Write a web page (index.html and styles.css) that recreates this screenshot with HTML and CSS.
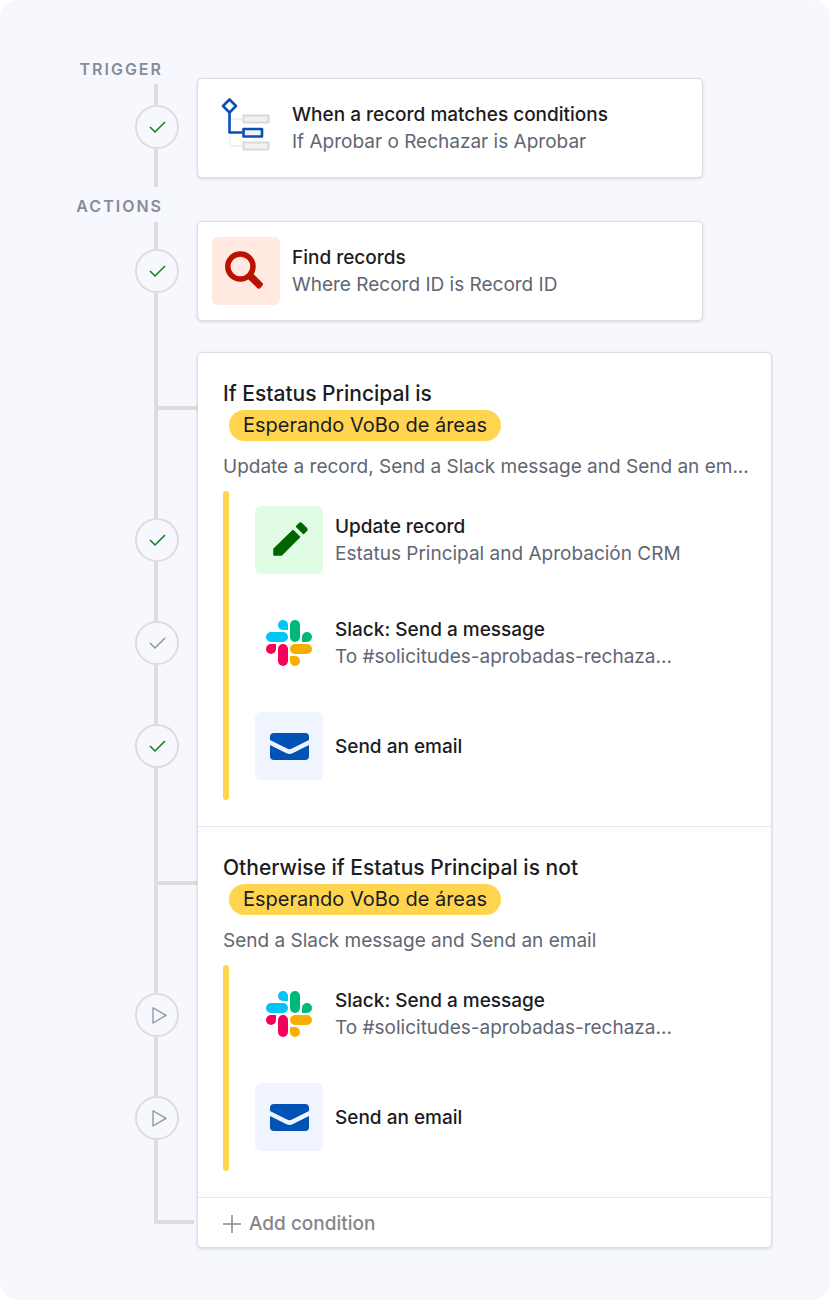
FILE: index.html
```html
<!DOCTYPE html>
<html lang="en">
<head>
  <meta charset="UTF-8">
  <meta name="viewport" content="width=device-width, initial-scale=1.0">
  <title>Automation</title>
  <link rel="stylesheet" href="styles.css">
</head>
<body>
  <!-- Shared icons -->
  <svg class="sprite" aria-hidden="true">
    <symbol id="check" viewBox="0 0 44 44">
      <path d="M15 22l5 5 10-10" fill="none" stroke="currentColor" stroke-width="1.5"/>
    </symbol>
    <symbol id="play" viewBox="0 0 44 44">
      <path d="M18 14.8v15.2l13-7.6z" fill="none" stroke="currentColor" stroke-width="1.3" stroke-linejoin="round"/>
    </symbol>
    <symbol id="slack" viewBox="0 0 68 68">
      <g transform="translate(11 11)">
        <path fill="#00c5f5" d="M5 12h12a5 5 0 0 1 0 10H5a5 5 0 0 1 0-10zM17 0a5 5 0 0 1 5 5v5h-5a5 5 0 0 1 0-10z"/>
        <path fill="#00b877" d="M29 0a5 5 0 0 1 5 5v12a5 5 0 0 1-10 0V5a5 5 0 0 1 5-5zM41 12a5 5 0 0 1 0 10h-5v-5a5 5 0 0 1 5-5z"/>
        <path fill="#f6005c" d="M5 24h5v5a5 5 0 1 1-5-5zM17 24a5 5 0 0 1 5 5v12a5 5 0 0 1-10 0V29a5 5 0 0 1 5-5z"/>
        <path fill="#f8ae00" d="M29 24h12a5 5 0 0 1 0 10H29a5 5 0 0 1 0-10zM24 36h5a5 5 0 1 1-5 5z"/>
      </g>
    </symbol>
    <symbol id="mail" viewBox="0 0 68 68">
      <path fill="#0052b4" d="M19 21h31q4 0 4 4v3L37 36.6q-2.500 1.200-5 0L15 28v-3q0-4 4-4z"/>
      <path fill="#0052b4" d="M15 33l16.500 8.300q3 1.400 6 0L54 33v11q0 4-4 4H19q-4 0-4-4z"/>
    </symbol>
  </svg>

  <main class="flow">
    <div class="rail">
      <h2 class="rail-label">TRIGGER</h2>
      <span class="line line-top"></span>
      <span class="node done"><svg><use href="#check"/></svg></span>
      <span class="line line-trigger"></span>
      <h2 class="rail-label actions">ACTIONS</h2>
      <span class="line line-actions"></span>
      <span class="node done"><svg><use href="#check"/></svg></span>
      <span class="line line-long"></span>
      <span class="branch"></span>
      <span class="line line-long"></span>
      <span class="node done"><svg><use href="#check"/></svg></span>
      <span class="line line-step"></span>
      <span class="node"><svg><use href="#check"/></svg></span>
      <span class="line line-step"></span>
      <span class="node done"><svg><use href="#check"/></svg></span>
      <span class="line line-long"></span>
      <span class="branch"></span>
      <span class="line line-long"></span>
      <span class="node"><svg><use href="#play"/></svg></span>
      <span class="line line-step"></span>
      <span class="node"><svg><use href="#play"/></svg></span>
      <span class="line line-end"></span>
      <span class="branch branch-end"></span>
    </div>

    <div class="cards">
      <article class="card step-card">
        <svg class="icon" viewBox="0 0 68 68">
          <g fill="none" stroke-linejoin="round">
            <path d="M18 25h12M18 43v9h12" stroke="#eff0f5" stroke-width="2"/>
            <rect x="31.500" y="21.500" width="25" height="7" fill="#f1f1f3" stroke="#d9dadd" stroke-width="2.200"/>
            <rect x="31.500" y="48.500" width="25" height="7" fill="#f1f1f3" stroke="#d9dadd" stroke-width="2.200"/>
            <path d="M17.500 5.500l6.500 6.500-6.500 6.500L11 12z" stroke="#0a4fb5" stroke-width="2.600"/>
            <path d="M17.500 18.500v20H30.500" stroke="#0a4fb5" stroke-width="2.600"/>
            <rect x="31.500" y="35" width="18.500" height="7.500" fill="#f1f3f9" stroke="#0a4fb5" stroke-width="2.600"/>
          </g>
        </svg>
        <div class="text">
          <h3>When a record matches conditions</h3>
          <p>If Aprobar o Rechazar is Aprobar</p>
        </div>
      </article>

      <article class="card step-card find">
        <svg class="icon red" viewBox="0 0 68 68">
          <circle cx="28.400" cy="29.500" r="12.600" fill="none" stroke="#b91200" stroke-width="5.500"/>
          <path d="M37.500 38.500l3-2.500 10 10q1.200 1.200 0 2.400l-2.400 2.800q-1.200 1.200-2.600 0L35.500 41.500z" fill="#b91200"/>
        </svg>
        <div class="text">
          <h3>Find records</h3>
          <p>Where Record ID is Record ID</p>
        </div>
      </article>

      <div class="card conditions">
        <section class="condition">
          <h2>If Estatus Principal is</h2>
          <span class="pill">Esperando VoBo de áreas</span>
          <p class="summary">Update a record, Send a Slack message and Send an em...</p>
          <ul class="steps">
            <li>
              <svg class="icon green" viewBox="0 0 68 68">
                <g fill="#006400" stroke="#006400" stroke-width="1.500" stroke-linejoin="round">
                  <path d="M19 49v-6l19-18.500 6.500 6.500-18 18z"/>
                  <path d="M41.500 20.500l3-3q1-1 2 0l5 5q1 1 0 2l-3 3z"/>
                </g>
              </svg>
              <div class="text">
                <h3>Update record</h3>
                <p>Estatus Principal and Aprobación CRM</p>
              </div>
            </li>
            <li>
              <svg class="icon"><use href="#slack"/></svg>
              <div class="text">
                <h3>Slack: Send a message</h3>
                <p>To #solicitudes-aprobadas-rechaza...</p>
              </div>
            </li>
            <li>
              <svg class="icon blue"><use href="#mail"/></svg>
              <div class="text">
                <h3>Send an email</h3>
              </div>
            </li>
          </ul>
        </section>

        <section class="condition">
          <h2>Otherwise if Estatus Principal is not</h2>
          <span class="pill">Esperando VoBo de áreas</span>
          <p class="summary">Send a Slack message and Send an email</p>
          <ul class="steps">
            <li>
              <svg class="icon"><use href="#slack"/></svg>
              <div class="text">
                <h3>Slack: Send a message</h3>
                <p>To #solicitudes-aprobadas-rechaza...</p>
              </div>
            </li>
            <li>
              <svg class="icon blue"><use href="#mail"/></svg>
              <div class="text">
                <h3>Send an email</h3>
              </div>
            </li>
          </ul>
        </section>

        <button class="add" type="button">
          <svg class="plus" viewBox="0 0 18 18"><path d="M9 0v18M0 9h18" stroke="currentColor" stroke-width="1.500"/></svg>
          Add condition
        </button>
      </div>
    </div>
  </main>
</body>
</html>
```
FILE: styles.css
```css
* {
  box-sizing: border-box;
}

body {
  margin: 0;
  background-color: #fff;
  color: #1b1c22;
  font-family: Inter, "Liberation Sans", sans-serif;
  font-size: 19px;
  line-height: 27px;
}

h2, h3, p, ul {
  margin: 0;
  padding: 0;
}

.sprite {
  display: none;
}

.flow {
  display: flex;
  min-height: 100vh;
  padding: 59px 58px 52px 60px;
  background-color: #f6f8fd;
  border-radius: 18px;
}

/* Rail on the left */
.rail {
  display: flex;
  flex-direction: column;
  flex: none;
  width: 137px;
}

.rail-label {
  height: 20px;
  padding-right: 34px;
  color: #868c98;
  font-size: 16px;
  font-weight: 600;
  line-height: 20px;
  letter-spacing: 2px;
  text-align: right;
}

.rail-label.actions {
  margin-top: 9px;
}

.line {
  width: 4px;
  margin-left: 94px;
  background-color: #dbdde1;
}

.line-top {
  height: 21px;
  margin-top: 5px;
}

.line-trigger {
  height: 38px;
}

.line-actions {
  height: 27px;
  margin-top: 6px;
}

.line-long {
  height: 113px;
}

.branch + .line-long {
  height: 108px;
}

.line-step {
  height: 59px;
}

.line-end {
  height: 80px;
}

.branch {
  height: 4px;
  margin-left: 94px;
  background-color: #dbdde1;
}

.branch-end {
  margin-right: 3px;
}

.node {
  display: flex;
  width: 44px;
  height: 44px;
  margin-left: 75px;
  border: 2px solid #dbdde1;
  border-radius: 50%;
  color: #8d929c;
}

.node svg {
  flex: none;
  width: 44px;
  height: 44px;
  margin: -2px;
}

.node.done {
  color: #0b7d1c;
}

/* Cards */
.cards {
  flex: 1;
  min-width: 0;
  padding-top: 19px;
}

.card {
  background-color: #fff;
  border: 1px solid #dcdee2;
  border-radius: 5px;
  box-shadow: 0 1px 3px rgba(40, 45, 60, 0.16);
}

.step-card {
  display: flex;
  align-items: center;
  gap: 12px;
  width: 88%;
  padding: 15px 14px;
}

.find {
  margin: 43px 0 31px;
}

.icon {
  flex: none;
  width: 68px;
  height: 68px;
  border-radius: 6px;
}

.icon.red {
  background-color: #ffe9e1;
}

.icon.green {
  background-color: #e0fce4;
}

.icon.blue {
  background-color: #eff4ff;
}

.text {
  min-width: 0;
}

.text h3 {
  font-size: 19px;
  font-weight: 500;
}

.text p, .summary {
  overflow: hidden;
  color: #616673;
  text-overflow: ellipsis;
  white-space: nowrap;
}

.condition {
  padding: 25px 16px 26px 25px;
  border-bottom: 1px solid #e8e9ec;
}

.condition h2 {
  font-size: 21px;
  font-weight: 500;
  line-height: 32px;
}

.pill {
  display: block;
  width: fit-content;
  margin-left: 6px;
  padding: 0 14px;
  background-color: #ffd54f;
  border-radius: 16px;
  font-size: 20px;
  line-height: 31px;
}

.summary {
  margin: 12px 0 11px;
}

.steps {
  position: relative;
  display: flex;
  flex-direction: column;
  gap: 35px;
  padding: 15px 0 20px 32px;
  list-style: none;
}

/* Yellow bar beside the steps */
.steps::before {
  content: "";
  position: absolute;
  top: 0;
  bottom: 0;
  left: 0;
  width: 6px;
  background-color: #ffd54f;
  border-radius: 3px;
}

.steps li {
  display: flex;
  align-items: center;
  gap: 12px;
}

.add {
  display: flex;
  align-items: center;
  gap: 8px;
  width: 100%;
  height: 49px;
  padding: 2px 25px 0;
  background: none;
  border: none;
  color: #858689;
  font: inherit;
  font-weight: 500;
  cursor: pointer;
}

.plus {
  width: 18px;
  height: 18px;
}
```
